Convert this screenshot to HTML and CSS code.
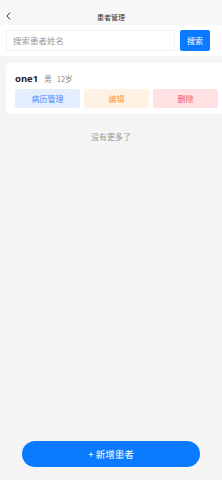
FILE: index.html
```html
<!DOCTYPE html>
<html lang="zh">
<head>
    <meta charset="UTF-8">
    <title>患者管理</title>
    <link rel="stylesheet" href="styles.css">
</head>
<body>
    <!-- Top bar -->
    <div class="topbar">
        <span class="back">
            <svg width="5" height="8" viewBox="0 0 5 8"><path d="M4 0.5 L1 4 L4 7.5" fill="none" stroke="#333" stroke-width="1"/></svg>
        </span>
        <div class="title">患者管理</div>
    </div>

    <!-- Search -->
    <div class="search-bar">
        <div class="search-input">搜索患者姓名</div>
        <button class="search-btn">搜索</button>
    </div>

    <!-- Patient list -->
    <div class="card">
        <div class="info">
            <span class="name">one1</span>
            <span class="meta">男</span>
            <span class="meta">12岁</span>
        </div>
        <div class="actions">
            <div class="act act-blue">病历管理</div>
            <div class="act act-orange">编辑</div>
            <div class="act act-red">删除</div>
        </div>
    </div>

    <div class="no-more">没有更多了</div>

    <!-- Add button -->
    <div class="footer">
        <button class="add-btn">+ 新增患者</button>
    </div>
</body>
</html>
```

FILE: styles.css
```css
/* page */
html, body {
    margin: 0;
    padding: 0;
    height: 100%;
}

body {
    background-color: #f5f5f5;
    font-family: "Noto Sans CJK SC", "Noto Sans", sans-serif;
    color: #333;
}

.topbar {
    height: 25px;
    display: flex;
    align-items: center;
    justify-content: center;
    position: relative;
    padding-top: 8px;
    box-sizing: border-box;
    background-color: #f7f7f7;
}

.back {
    position: absolute;
    left: 6px;
    top: 12px;
    line-height: 0;
}

.title {
    font-size: 7px;
    color: #333;
}

.search-bar {
    background-color: #fff;
    display: flex;
    align-items: center;
    padding: 5px 12px 5px 6px;
    gap: 5px;
    height: 31px;
    box-sizing: border-box;
}

.search-input {
    flex: 1;
    height: 21px;
    border: 1px solid #f0f0f0;
    border-radius: 2px;
    box-sizing: border-box;
    font-size: 8.5px;
    color: #999;
    line-height: 19px;
    padding-left: 6px;
}

.search-btn {
    width: 30px;
    height: 21px;
    border: none;
    border-radius: 2px;
    background-color: #0a7bff;
    color: #fff;
    font-family: inherit;
    font-size: 8px;
    padding: 0;
}

.card {
    margin: 7px 0 0 6px;
    background-color: #fff;
    border-radius: 4px 0 0 4px;
    padding: 8px 4px 6px 9px;
}

.info {
    display: flex;
    align-items: baseline;
    height: 16px;
    line-height: 16px;
}

.name {
    font-family: "Noto Sans", sans-serif;
    font-weight: bold;
    font-size: 9.5px;
    color: #222;
    margin-right: 6px;
}

.meta {
    font-size: 7.5px;
    color: #888;
    margin-right: 5px;
}

.actions {
    display: flex;
    gap: 4px;
    margin-top: 2px;
}

.act {
    width: 65px;
    height: 19px;
    border-radius: 2px;
    font-size: 8px;
    text-align: center;
    line-height: 19px;
}

.act-blue {
    background-color: #e3efff;
    color: #3d8bff;
}

.act-orange {
    background-color: #fff1e4;
    color: #ff9c34;
}

.act-red {
    background-color: #ffe0e3;
    color: #f2545f;
}

.no-more {
    text-align: center;
    font-size: 8px;
    color: #999;
    margin-top: 17px;
}

.footer {
    position: fixed;
    left: 0;
    right: 0;
    bottom: 13px;
    display: flex;
    justify-content: center;
}

.add-btn {
    width: 178px;
    height: 26px;
    border: none;
    border-radius: 13px;
    background-color: #0a7bff;
    color: #fff;
    font-family: inherit;
    font-size: 9.5px;
    padding: 0;
}
```
